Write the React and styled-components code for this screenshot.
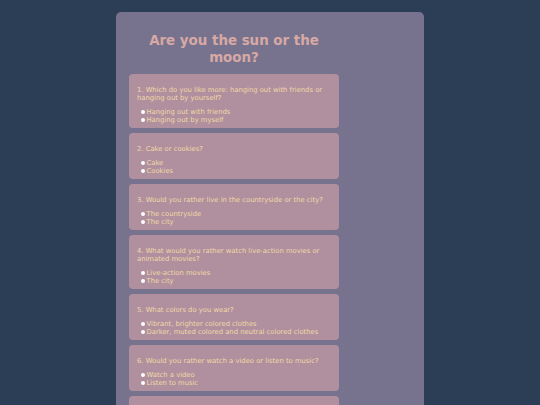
import React from "react";
import styled, { createGlobalStyle } from "styled-components";

const questions = [
  {
    q: "1. Which do you like more: hanging out with friends or hanging out by yourself?",
    options: ["Hanging out with friends", "Hanging out by myself"],
  },
  { q: "2. Cake or cookies?", options: ["Cake", "Cookies"] },
  {
    q: "3. Would you rather live in the countryside or the city?",
    options: ["The countryside", "The city"],
  },
  {
    q: "4. What would you rather watch live-action movies or animated movies?",
    options: ["Live-action movies", "The city"],
  },
  {
    q: "5. What colors do you wear?",
    options: [
      "Vibrant, brighter colored clothes",
      "Darker, muted colored and neutral colored clothes",
    ],
  },
  {
    q: "6. Would you rather watch a video or listen to music?",
    options: ["Watch a video", "Listen to music"],
  },
  {
    q: "7. Do you prefer mornings or nights?",
    options: ["Mornings", "Nights"],
  },
];

function App() {
  return (
    <>
      <GlobalStyle />
      <Page>
        <Quiz>
          <Title>Are you the sun or the moon?</Title>
          {questions.map((item) => (
            <Card key={item.q}>
              <Question>{item.q}</Question>
              <Options>
                {item.options.map((o) => (
                  <Option key={o}>{o}</Option>
                ))}
              </Options>
            </Card>
          ))}
        </Quiz>
      </Page>
    </>
  );
}

export default App;

const GlobalStyle = createGlobalStyle`
  body {
    margin: 0;
    background: #2c3e56;
    font-family: "DejaVu Sans", Verdana, sans-serif;
    overflow: hidden;
  }
`;

const Page = styled.div`
  display: flex;
  justify-content: center;
  padding-top: 12px;
`;

const Quiz = styled.div`
  width: 282px;
  padding: 20px 13px 20px;
  background: #77738f;
  border-radius: 5px;
  display: flex;
  flex-direction: column;
  gap: 5px;
`;

const Title = styled.h1`
  width: 210px;
  margin: 0 0 3px;
  text-align: center;
  color: #d8a9a4;
  font-size: 13.4px;
  line-height: 17px;
  font-weight: bold;
`;

const Card = styled.div`
  width: 194px;
  padding: 12px 8px 4px;
  background: #b0909f;
  border-radius: 4px;
  color: #f1d8a4;
  font-size: 6.8px;
`;

const Question = styled.p`
  margin: 0 0 6px;
  line-height: 8px;
`;

const Options = styled.ul`
  margin: 0;
  padding: 0;
  list-style: none;
`;

const Option = styled.li`
  display: flex;
  align-items: center;
  line-height: 8px;
  padding-left: 4px;

  &::before {
    content: "";
    width: 4px;
    height: 4px;
    border-radius: 50%;
    background: #ffffff;
    margin-right: 1.5px;
  }
`;
